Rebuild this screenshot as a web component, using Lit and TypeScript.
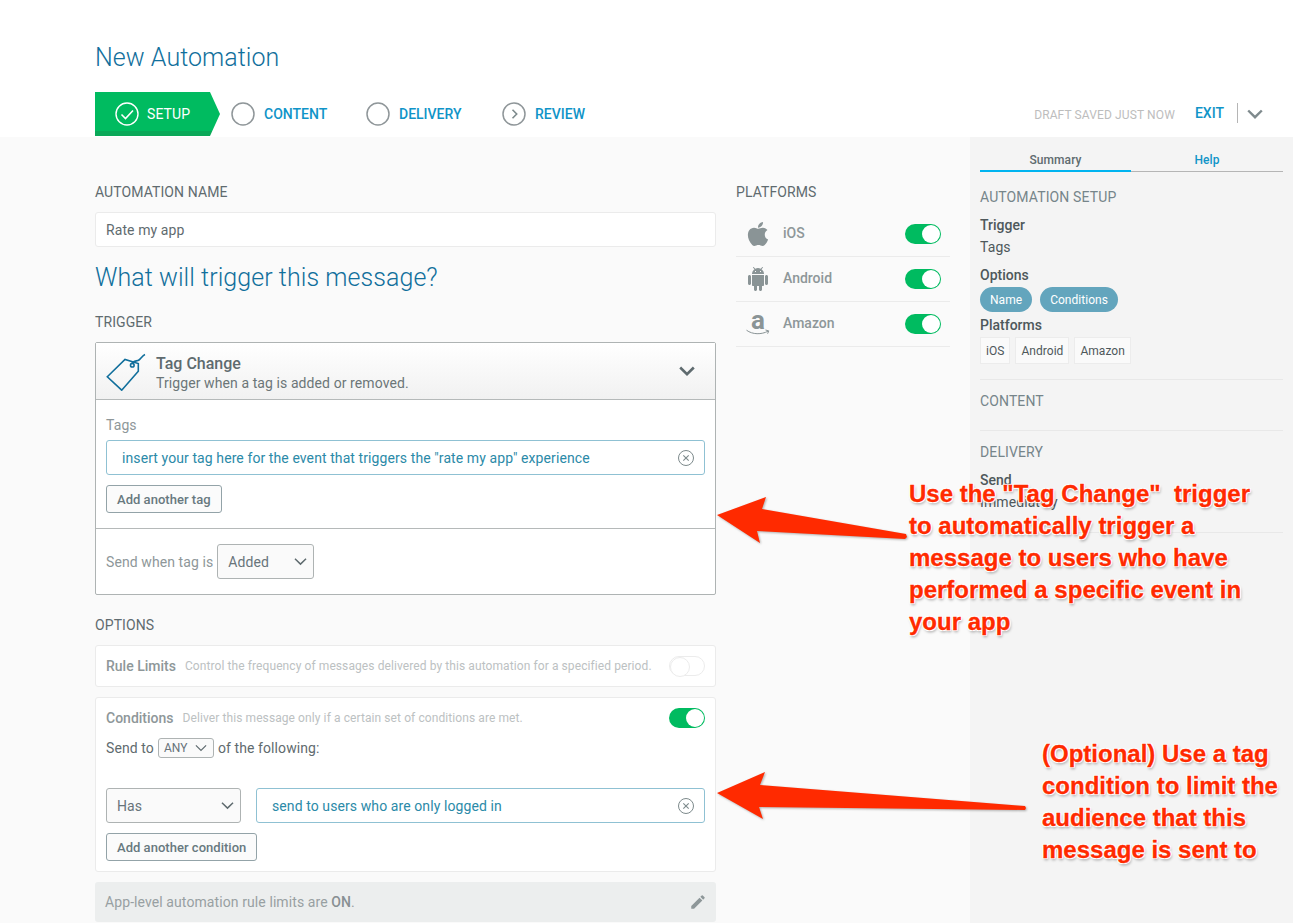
import { LitElement, html, css, svg } from "lit";
import { customElement } from "lit/decorators.js";

const chevron = (w: number, h: number, sw: number, color: string) => html`<svg class="chev" width="${w}" height="${h}" viewBox="0 0 16 10"><path d="M1.2 1.5 8 8.2l6.8-6.7" fill="none" stroke="${color}" stroke-width="${sw}"/></svg>`;
const clearIcon = html`<svg class="clear" width="18" height="18" viewBox="0 0 18 18"><circle cx="9" cy="9" r="7.5" fill="none" stroke="#7d8a8c" stroke-width="1"/><path d="M6.3 6.3l5.4 5.4M11.7 6.3l-5.4 5.4" stroke="#7d8a8c" stroke-width="1.1"/></svg>`;

@customElement("app-root")
export class AppRoot extends LitElement {
  static styles = css`
    :host { display: block; position: relative; width: 1293px; height: 923px; overflow: hidden; background: #fff; font-family: Roboto, "Noto Sans", sans-serif; color: #5f6b6f; font-size: 14px; letter-spacing: .09px; }
    * { box-sizing: border-box; }
    .top { height: 137px; padding: 41px 0 0 95px; background: #fff; }
    h1 { margin: 0; font-weight: 300; font-size: 25px; line-height: 34px; color: #116f9c; letter-spacing: .05px; }
    .steps { display: flex; align-items: flex-start; height: 45px; margin-top: 17px; }
    .step { display: flex; align-items: center; height: 44px; font-weight: 500; font-size: 14px; color: #1094c8; letter-spacing: 0; }
    .step .circ { margin-right: 9px; flex: none; }
    .setup { width: 125px; padding-left: 20px; color: #fff; background: linear-gradient(#00bb60 39px, #0aa858 39px); clip-path: polygon(0 0, 115px 0, 125px 22px, 115px 44px, 0 44px); font-weight: 400; margin-right: 11px; letter-spacing: .1px; }
    .setup .circ { margin-right: 8px; }
    .s2 { width: 135px; } .s3 { width: 136px; }
    .tools { margin-left: auto; display: flex; align-items: center; height: 44px; padding-right: 30px; }
    .draft { font-size: 12px; color: #bdbdbd; margin: 2px 20px 0 0; letter-spacing: .12px; }
    .exit { color: #1094c8; font-weight: 500; font-size: 14px; margin-top: -2px; letter-spacing: 0; }
    .sep { width: 1px; height: 20px; background: #b5b5b5; margin: -2px 9px 0 13px; }
    .body { display: flex; height: 786px; background: #fafafa; }
    .main { width: 970px; padding: 0 20px 0 95px; display: flex; gap: 20px; }
    .left { width: 621px; flex: none; }
    .right { width: 214px; flex: none; }
    .label { font-size: 14px; line-height: 20px; color: #5f6b6f; }
    .label.first { margin-top: 45px; }
    .name { height: 35px; margin-top: 10px; background: #fff; border: 1px solid #ebebeb; border-radius: 3px; display: flex; align-items: center; padding-left: 10px; color: #5f6b6f; }
    h2 { margin: 14px 0 0; font-weight: 300; font-size: 25px; line-height: 34px; color: #116f9c; letter-spacing: .06px; }
    .trigger-l { margin-top: 17px; }
    .card { margin-top: 10px; height: 253px; border: 1px solid #aeb3b3; border-radius: 2px; background: #fff; }
    .chead { height: 57px; border-bottom: 1px solid #b5b9b9; background: linear-gradient(#fff, #f1f1f1); display: flex; align-items: center; padding: 0 20px 0 10px; }
    .chead .txt { margin-left: 10px; flex: 1; padding-top: 4px; margin-top: -4px; position: relative; top: 2px; }
    .chead b { display: block; font-weight: 500; font-size: 16px; line-height: 20px; color: #5f6b6f; letter-spacing: 0; }
    .chead span { display: block; font-size: 14px; line-height: 18px; color: #6c7678; }
    .tags { height: 129px; border-bottom: 1px solid #b5b9b9; padding: 15px 10px 0; }
    .muted { color: #8e9799; font-size: 14px; line-height: 20px; }
    .tinput { height: 35px; margin-top: 5px; border: 1px solid #8fc1d3; border-radius: 3px; display: flex; align-items: center; justify-content: space-between; padding: 0 9px 0 15px; color: #2b8aa8; background: #fff; }
    .btn { display: inline-flex; align-items: center; height: 28px; padding: 0 10px; margin-top: 10px; font-weight: 500; font-size: 13px; color: #68797f; border: 1px solid #93a3a8; border-radius: 3px; background: #fbfbfb; letter-spacing: .03px; }
    .when { display: flex; align-items: center; padding: 15px 10px 0; gap: 4px; }
    .sel { display: flex; align-items: center; justify-content: space-between; border: 1px solid #aeb3b3; border-radius: 3px; background: #fafafa; color: #68747a; }
    .sel1 { width: 97px; height: 35px; padding: 0 6px 0 10px; }
    .opt-l { margin-top: 20px; }
    .opt { margin-top: 10px; background: #fff; border: 1px solid #ebebeb; border-radius: 3px; }
    .rule { height: 42px; display: flex; align-items: center; padding: 0 10px; }
    .opt b { font-weight: 500; color: #8e9799; font-size: 14px; margin-right: 9px; letter-spacing: 0; }
    .opt small { font-size: 12px; color: #bcc1c2; }
    .rule .tg, .condh .tg { margin-left: auto; }
    .cond { height: 175px; padding: 10px 10px 0; }
    .condh { display: flex; align-items: center; height: 20px; }
    .sendto { display: flex; align-items: center; gap: 4px; margin-top: 10px; height: 20px; color: #5f6b6f; }
    .sel2 { width: 56px; height: 20px; padding: 0 6px 0 5px; font-size: 12px; }
    .crow { display: flex; gap: 15px; margin-top: 30px; }
    .sel3 { width: 135px; height: 35px; padding: 0 6px 0 10px; }
    .crow .tinput { flex: 1; margin-top: 0; }
    .limit { margin-top: 10px; height: 40px; background: #eceeee; border-radius: 3px; display: flex; align-items: center; justify-content: space-between; padding: 0 9px 0 10px; color: #98a0a2; }
    .limit b { font-weight: 500; color: #889093; }
    .p-l { margin-top: 45px; }
    .plats { margin-top: 10px; }
    .plat { height: 45px; display: flex; align-items: center; border-bottom: 1px solid #ebebeb; color: #8e9799; font-weight: 500; padding-right: 9px; letter-spacing: 0; }
    .plat .ic { width: 47px; height: 32px; display: flex; justify-content: center; align-items: center; padding-right: 3px; }
    .plat .pn { flex: 1; margin-top: -2px; }
    .amz { position: relative; display: flex; flex-direction: column; align-items: center; height: 28px; font-size: 26px; font-weight: 700; line-height: 20px; color: #8a9496; }
    .amz svg { position: absolute; left: -5px; top: 19px; }
    .tg { position: relative; width: 36px; height: 20px; border-radius: 10px; background: #00bb60; flex: none; }
    .tg::after { content: ""; position: absolute; right: 1px; top: 1px; width: 18px; height: 18px; border-radius: 50%; background: #fff; }
    .tg.off { background: #fff; border: 1px solid #ececec; }
    .tg.off::after { left: 0; top: 0; border: 1px solid #ececec; width: 18px; height: 18px; }
    .side { flex: 1; background: #f4f4f4; padding: 0 10px; font-size: 14px; }
    .tabs { display: flex; height: 35px; font-size: 12px; font-weight: 500; }
    .tabs div { flex: 1; text-align: center; padding-top: 15px; line-height: 17px; border-bottom: 1px solid #b5b5b5; color: #5f6b6f; }
    .tabs .on { flex: 0 0 151px; border-bottom: 2px solid #00b4f0; height: 35px; }
    .tabs .help { color: #1094c8; }
    .sh { color: #76858a; font-size: 14px; line-height: 20px; letter-spacing: .12px; }
    .sh.a { margin-top: 15px; }
    .sb { font-weight: 500; color: #4e585b; line-height: 20px; margin-top: 8px; font-size: 14px; letter-spacing: 0; }
    .sb.tight { margin-top: 3px; }
    .sv { color: #4e585b; line-height: 20px; margin-top: 2px; }
    .pills { display: flex; gap: 8px; margin-top: 2px; }
    .pill { height: 25px; border-radius: 13px; background: #63a5bd; color: #fff; font-size: 12px; padding: 0 10px; display: flex; align-items: center; letter-spacing: .04px; }
    .chips { display: flex; gap: 5px; margin-top: 2px; }
    .chip { height: 27px; background: #fafafa; border: 1px solid #ececec; font-size: 12px; color: #4e585b; padding: 0 5px; display: flex; align-items: center; letter-spacing: .04px; }
    .sec { border-bottom: 1px solid #e8e8e8; }
    .s1 { height: 193px; }
    .s5 { height: 51px; padding-top: 11px; }
    .s6 { height: 102px; padding-top: 11px; }
    .imm { margin-top: 2px; }
    .overlay { position: absolute; inset: 0; pointer-events: none; letter-spacing: 0; }
    .note { position: absolute; font: bold 24px/32px "Liberation Sans", Arial, sans-serif; color: #ff2a00; white-space: pre; -webkit-text-stroke: .3px #ff2a00; text-shadow: 1px 0 0 #fff, -1px 0 0 #fff, 0 1px 0 #fff, 0 -1px 0 #fff, 1px 1px 1px #fff, -1px -1px 1px #fff, 1px -1px 1px #fff, -1px 1px 1px #fff, 1px 2px 3px rgba(0,0,0,.4); }
    .n1 { left: 909px; top: 478px; }
    .n2 { left: 1042px; top: 738px; }
    .arrows { position: absolute; left: 0; top: 0; filter: drop-shadow(1px 1px 1px rgba(0,0,0,.3)); }
  `;

  private toggle(off = false) { return html`<div class="tg ${off ? "off" : ""}"></div>`; }

  render() {
    return html`
      <div class="top">
        <h1>New Automation</h1>
        <div class="steps">
          <div class="step setup">
            <svg class="circ" width="24" height="24" viewBox="0 0 24 24"><circle cx="12" cy="12" r="11" fill="none" stroke="#fff" stroke-width="1.4"/><path d="M6.5 12.5l4 4 7.5-8" fill="none" stroke="#fff" stroke-width="1.6"/></svg>SETUP
          </div>
          <div class="step s2"><svg class="circ" width="24" height="24" viewBox="0 0 24 24"><circle cx="12" cy="12" r="11" fill="none" stroke="#8f9699" stroke-width="1.5"/></svg>CONTENT</div>
          <div class="step s3"><svg class="circ" width="24" height="24" viewBox="0 0 24 24"><circle cx="12" cy="12" r="11" fill="none" stroke="#8f9699" stroke-width="1.5"/></svg>DELIVERY</div>
          <div class="step s4"><svg class="circ" width="24" height="24" viewBox="0 0 24 24"><circle cx="12" cy="12" r="11" fill="none" stroke="#8f9699" stroke-width="1.5"/><path d="M10.5 7.8l4.2 4.2-4.2 4.2" fill="none" stroke="#7d8a8c" stroke-width="1.6"/></svg>REVIEW</div>
          <div class="tools">
            <span class="draft">DRAFT SAVED JUST NOW</span>
            <span class="exit">EXIT</span>
            <span class="sep"></span>
            ${chevron(16, 10, 2.4, "#7f8a8d")}
          </div>
        </div>
      </div>
      <div class="body">
        <div class="main">
          <div class="left">
            <div class="label first">AUTOMATION NAME</div>
            <div class="name">Rate my app</div>
            <h2>What will trigger this message?</h2>
            <div class="label trigger-l">TRIGGER</div>
            <div class="card">
              <div class="chead">
                <svg width="40" height="40" viewBox="0 0 40 40"><g fill="none" stroke="#116f9c" stroke-width="1.6"><path d="M1.3 25.8 19 8.500l13.300 4v7.700L15.700 39.200z"/><circle cx="26.300" cy="14.200" r="1.800"/><path d="M26 13c1-4 5-2.500 7-4 2-1.500 3.500-4.500 6-5.500"/></g></svg>
                <div class="txt"><b>Tag Change</b><span>Trigger when a tag is added or removed.</span></div>
                ${chevron(16, 10, 2.6, "#5f6b6f")}
              </div>
              <div class="tags">
                <div class="muted">Tags</div>
                <div class="tinput"><span>insert your tag here for the event that triggers the "rate my app" experience</span>${clearIcon}</div>
                <div class="btn">Add another tag</div>
              </div>
              <div class="when"><span class="muted">Send when tag is</span>
                <div class="sel sel1">Added ${chevron(13, 9, 1.8, "#5f6b6f")}</div>
              </div>
            </div>
            <div class="label opt-l">OPTIONS</div>
            <div class="opt rule"><b>Rule Limits</b><small>Control the frequency of messages delivered by this automation for a specified period.</small>${this.toggle(true)}</div>
            <div class="opt cond">
              <div class="condh"><b>Conditions</b><small>Deliver this message only if a certain set of conditions are met.</small>${this.toggle()}</div>
              <div class="sendto">Send to <div class="sel sel2">ANY ${chevron(12, 8, 1.6, "#5f6b6f")}</div> of the following:</div>
              <div class="crow">
                <div class="sel sel3">Has ${chevron(13, 9, 1.8, "#5f6b6f")}</div>
                <div class="tinput"><span>send to users who are only logged in</span>${clearIcon}</div>
              </div>
              <div class="btn">Add another condition</div>
            </div>
            <div class="limit"><span>App-level automation rule limits are <b>ON</b>.</span>
              <svg width="18" height="18" viewBox="0 0 24 24"><path fill="#8e9799" d="M3 17.25V21h3.75L17.81 9.94l-3.75-3.75L3 17.25zM20.71 7.04a1 1 0 0 0 0-1.41l-2.34-2.34a1 1 0 0 0-1.41 0l-1.83 1.83 3.75 3.75 1.83-1.83z"/></svg>
            </div>
          </div>
          <div class="right">
            <div class="label p-l">PLATFORMS</div>
            <div class="plats">
              <div class="plat"><span class="ic"><svg width="32" height="32" viewBox="0 0 24 24"><path fill="#8a9496" d="M17.05 20.28c-.98.95-2.05.8-3.08.35-1.09-.46-2.09-.48-3.24 0-1.44.62-2.2.44-3.06-.35C2.79 15.25 3.51 7.59 9.05 7.31c1.35.07 2.29.74 3.08.8 1.18-.24 2.31-.93 3.57-.84 1.51.12 2.65.72 3.4 1.8-3.12 1.87-2.38 5.98.48 7.13-.57 1.5-1.31 2.99-2.54 4.09zM12.03 7.25c-.15-2.23 1.66-4.07 3.74-4.25.29 2.58-2.34 4.5-3.74 4.25z"/></svg></span><span class="pn">iOS</span>${this.toggle()}</div>
              <div class="plat"><span class="ic"><svg width="24" height="24" viewBox="0 0 24 24"><path fill="#8a9496" d="M6 18c0 .55.45 1 1 1h1v3.5c0 .83.67 1.5 1.5 1.5s1.5-.67 1.5-1.5V19h2v3.5c0 .83.67 1.5 1.5 1.5s1.5-.67 1.5-1.5V19h1c.55 0 1-.45 1-1V8H6v10zM3.5 8C2.67 8 2 8.67 2 9.5v7c0 .83.67 1.5 1.5 1.5S5 17.33 5 16.5v-7C5 8.67 4.33 8 3.5 8zm17 0c-.83 0-1.5.67-1.5 1.5v7c0 .83.67 1.5 1.5 1.5s1.5-.67 1.5-1.5v-7c0-.83-.67-1.5-1.5-1.5zm-4.97-5.84l1.3-1.3c.2-.2.2-.51 0-.71-.2-.2-.51-.2-.71 0l-1.48 1.48C13.85 1.23 12.95 1 12 1c-.96 0-1.86.23-2.66.63L7.85.15c-.2-.2-.51-.2-.71 0-.2.2-.2.51 0 .71l1.31 1.31C6.97 3.26 6 5.01 6 7h12c0-1.99-.97-3.75-2.47-4.84zM10 5H9V4h1v1zm5 0h-1V4h1v1z"/></svg></span><span class="pn">Android</span>${this.toggle()}</div>
              <div class="plat"><span class="ic"><span class="amz">a<svg width="24" height="8" viewBox="0 0 24 8"><path d="M.5 1.200c6 4.500 15 4.500 21.500 1M19.500 1l3.300.9-1.200 2.800" fill="none" stroke="#8a9496" stroke-width="1"/></svg></span></span><span class="pn">Amazon</span>${this.toggle()}</div>
            </div>
          </div>
        </div>
        <div class="side">
          <div class="tabs"><div class="on">Summary</div><div class="help">Help</div></div>
          <div class="sec s1">
            <div class="sh a">AUTOMATION SETUP</div>
            <div class="sb">Trigger</div>
            <div class="sv">Tags</div>
            <div class="sb">Options</div>
            <div class="pills"><span class="pill">Name</span><span class="pill">Conditions</span></div>
            <div class="sb tight">Platforms</div>
            <div class="chips"><span class="chip">iOS</span><span class="chip">Android</span><span class="chip">Amazon</span></div>
          </div>
          <div class="sec s5"><div class="sh">CONTENT</div></div>
          <div class="sec s6"><div class="sh">DELIVERY</div><div class="sb">Send</div><div class="sv imm">Immediately</div></div>
        </div>
      </div>
      <div class="overlay">
        <svg class="arrows" width="1293" height="923" viewBox="0 0 1293 923">
          ${svg`<polygon fill="#ff2a00" points="717,515 766,497 762,509 906,534 907,537 905,539 757,531 760,543"/>
          <polygon fill="#ff2a00" points="717,793 765,772 760,785 1025,806 1026,808 1025,810 759,807 763,819"/>`}
        </svg>
        <div class="note n1">Use the "Tag Change"  trigger
to automatically trigger a
message to users who have
performed a specific event in
your app</div>
        <div class="note n2">(Optional) Use a tag
condition to limit the
audience that this
message is sent to</div>
      </div>
    `;
  }
}
